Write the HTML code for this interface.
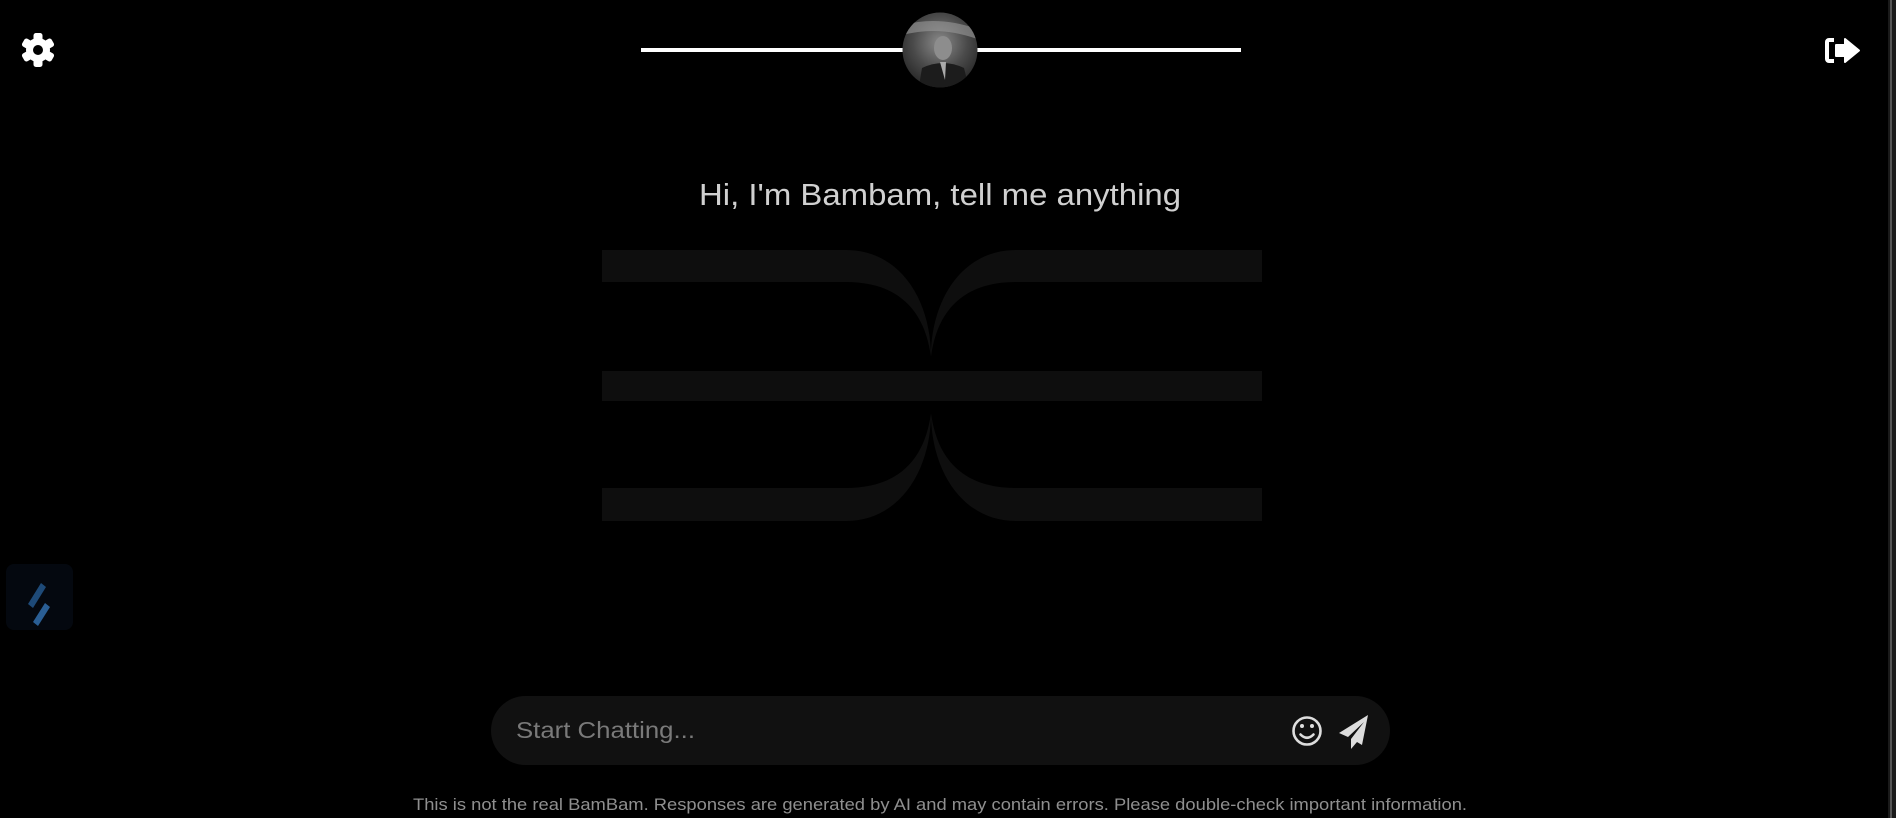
<!DOCTYPE html>
<html><head><meta charset="utf-8"><style>
html,body{margin:0;padding:0;background:#000;width:1896px;height:818px;overflow:hidden;font-family:"Liberation Sans",sans-serif}
.abs{position:absolute}
</style></head><body>
<div class="abs" style="left:0;top:0;width:1896px;height:818px">
<svg width="1896" height="818" style="position:absolute;left:0;top:0">
  <!-- gear -->
  <g transform="translate(38,50)" fill="#fff">
    <g>
      <rect x="-4.5" y="-17" width="9" height="34" rx="2.5"/>
      <rect x="-4.5" y="-17" width="9" height="34" rx="2.5" transform="rotate(60)"/>
      <rect x="-4.5" y="-17" width="9" height="34" rx="2.5" transform="rotate(120)"/>
    </g>
    <circle r="12"/>
    <circle r="5" fill="#000"/>
  </g>
  <!-- logout -->
  <g fill="#fff">
    <path d="M1834 38 h-5 a4 4 0 0 0 -4 4 v17 a4 4 0 0 0 4 4 h5 v-4 h-5 v-17 h5 z"/>
    <path d="M1836 45 h9 v-6 l14 11.5 l-14 11.5 v-6 h-9 z" stroke="#fff" stroke-width="2" stroke-linejoin="round"/>
  </g>
  <!-- top line -->
  <rect x="641" y="48" width="600" height="4" fill="#fff"/>
  <!-- avatar -->
  <defs>
    <radialGradient id="av" cx="50%" cy="40%" r="60%">
      <stop offset="0" stop-color="#8a8a8a"/><stop offset="0.6" stop-color="#4a4a4a"/><stop offset="1" stop-color="#2a2a2a"/>
    </radialGradient>
    <clipPath id="cc"><circle cx="940" cy="50" r="37.5"/></clipPath>
  </defs>
  <circle cx="940" cy="50" r="37.5" fill="url(#av)"/>
  <g clip-path="url(#cc)">
    <path d="M903 25 Q940 15 980 30 L980 40 Q940 25 903 35 Z" fill="#999" opacity="0.6"/>
    <ellipse cx="943" cy="48" rx="9" ry="12" fill="#8d8d8d"/>
    <path d="M918 92 L922 68 Q943 58 964 68 L970 92 Z" fill="#1c1c1c"/>
    <path d="M940 62 L946 62 L945 80 Z" fill="#aaa"/>
  </g>
  <!-- heading -->
  <text x="940" y="205" text-anchor="middle" font-family="Liberation Sans, sans-serif" font-size="31" fill="#d0d0d0" textLength="482" lengthAdjust="spacingAndGlyphs">Hi, I'm Bambam, tell me anything</text>
  <!-- bg logo -->
  <g fill="#0e0e0e">
    <path d="M602 250 H846 C900 250 931 300 931 357 C925 312 900 282 846 282 H602 Z"/>
    <path d="M1262 250 H1016 C962 250 931 300 931 357 C937 312 962 282 1016 282 H1262 Z"/>
    <rect x="602" y="371" width="660" height="30"/>
    <path d="M602 521 H846 C900 521 931 470 931 413 C925 458 900 488 846 488 H602 Z"/>
    <path d="M1262 521 H1016 C962 521 931 470 931 413 C937 458 962 488 1016 488 H1262 Z"/>
  </g>
  <!-- left widget -->
  <rect x="6" y="564" width="67" height="66" rx="8" fill="#04080f"/>
  <path d="M41 583 L46 587 L33 608 L28 604 Z" fill="#1e4a78"/>
  <path d="M45 603 L50 607 L38 626 L33 622 Z" fill="#2a5e94"/>
  <!-- input -->
  <rect x="491" y="696" width="899" height="69" rx="34.5" fill="#111"/>
  <text x="516" y="738" font-family="Liberation Sans, sans-serif" font-size="23" fill="#7a7a7a" textLength="179" lengthAdjust="spacingAndGlyphs">Start Chatting...</text>
  <!-- emoji -->
  <g transform="translate(1307,731)" fill="none" stroke="#ddd" stroke-width="2.6">
    <circle r="13.5"/>
    <path d="M-6.5 3.5 Q0 10 6.5 3.5" stroke-linecap="round"/>
  </g>
  <circle cx="1302" cy="726" r="2" fill="#ddd"/>
  <circle cx="1312" cy="726" r="2" fill="#ddd"/>
  <!-- send -->
  <path d="M1368 715 L1339 733 L1348 737 L1364 722 L1351 739 L1351 749 L1357 742 L1362 745 Z" fill="#ddd"/>
  <!-- disclaimer -->
  <text x="940" y="810" text-anchor="middle" font-family="Liberation Sans, sans-serif" font-size="16.5" fill="#8f8f8f" textLength="1054" lengthAdjust="spacingAndGlyphs">This is not the real BamBam. Responses are generated by AI and may contain errors. Please double-check important information.</text>
  <!-- scrollbar -->
  <rect x="1888" y="0" width="8" height="818" fill="#1a1a1a"/>
  <rect x="1890" y="0" width="2" height="818" fill="#555"/>
</svg>
</div>
</body></html>
